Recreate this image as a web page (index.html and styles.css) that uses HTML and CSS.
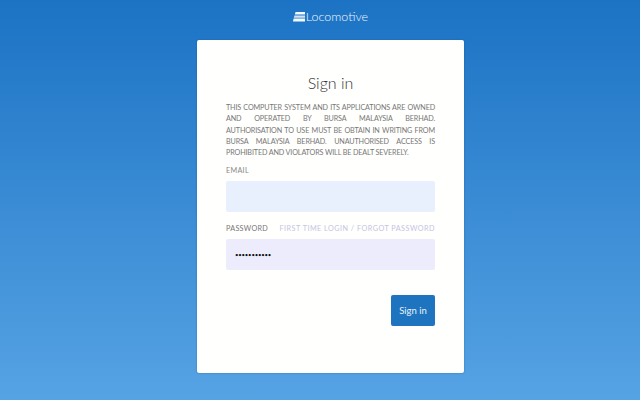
FILE: index.html
```html
<!DOCTYPE html>
<html lang="en">
<head>
<meta charset="utf-8">
<title>Locomotive</title>
<link rel="stylesheet" href="styles.css">
</head>
<body>
<header class="brand">
  <svg class="logo" width="12" height="10" viewBox="0 0 12 10"><path class="logo-a" d="M2.6 0H12V2.6H1.8Z"/><path class="logo-b" d="M1.4 3.4H12V5.8H.9Z"/><path class="logo-c" d="M.6 6.6H12V9.6H0Z"/></svg>
  <span class="brand-name">Locomotive</span>
</header>
<main class="card">
  <h1 class="title">Sign in</h1>
  <p class="notice">
    <span class="line">THIS COMPUTER SYSTEM AND ITS APPLICATIONS ARE OWNED</span>
    <span class="line">AND OPERATED BY BURSA MALAYSIA BERHAD.</span>
    <span class="line">AUTHORISATION TO USE MUST BE OBTAIN IN WRITING FROM</span>
    <span class="line">BURSA MALAYSIA BERHAD. UNAUTHORISED ACCESS IS</span>
    <span class="line line-last">PROHIBITED AND VIOLATORS WILL BE DEALT SEVERELY.</span>
  </p>
  <div class="label-row"><span class="label">EMAIL</span></div>
  <div class="field field-email"></div>
  <div class="label-row label-row-pw">
    <span class="label">PASSWORD</span>
    <span class="link">FIRST TIME LOGIN / FORGOT PASSWORD</span>
  </div>
  <div class="field field-pw"><span class="dots">•••••••••••</span></div>
  <div class="actions"><button class="btn">Sign in</button></div>
</main>
</body>
</html>
```
FILE: styles.css
```css
html, body { height: 100%; }
body {
  margin: 0;
  height: 400px;
  overflow: hidden;
  box-sizing: border-box;
  padding-left: 21px;
  background: linear-gradient(to bottom, #1c73c4 0%, #56a3e4 100%);
  font-family: Lato, "Noto Sans", sans-serif;
  display: flex;
  flex-direction: column;
  align-items: center;
}
.brand {
  height: 40px;
  flex: none;
  display: flex;
  align-items: center;
  justify-content: center;
  gap: 1px;
  color: #f2f8fd;
  padding-bottom: 6px;
  box-sizing: border-box;
}
.logo { display: block; }
.logo-a, .logo-b, .logo-c { fill: #f2f8fd; }
.logo-b { fill: #cfe3f5; }
.brand-name { font-size: 12.5px; line-height: 16px; font-weight: 300; }
.card {
  width: 267px;
  height: 333px;
  box-sizing: border-box;
  background: #fffffd;
  border-radius: 2px;
  box-shadow: 0 0 2px rgba(10, 60, 120, .45);
  padding: 0 29px;
  flex: none;
}
.title {
  margin: 32px 0 0;
  font-size: 16px;
  line-height: 22px;
  font-weight: 300;
  text-align: center;
  color: #2f3336;
}
.notice {
  margin: 8px 0 0;
  font-size: 7.2px;
  line-height: 11.3px;
  letter-spacing: -.13px;
  color: #777;
}
.line {
  display: block;
  white-space: nowrap;
  text-align: justify;
  text-align-last: justify;
}
.line-last { text-align-last: left; }
.label-row {
  display: flex;
  justify-content: space-between;
  margin-top: 7px;
  height: 12px;
  line-height: 12px;
  font-size: 7.2px;
  letter-spacing: .3px;
  white-space: nowrap;
}
.label { color: #888; }
.label-row-pw { margin-top: 11px; }
.label-row-pw .label { color: #777; }
.link { color: #c4c4e4; letter-spacing: .5px; }
.field {
  height: 31px;
  margin-top: 4px;
  border-radius: 2px;
  background: #e8f0fe;
  display: flex;
  align-items: center;
  padding-left: 9px;
}
.field-pw { background: #ececfd; }
.dots { font-size: 6px; letter-spacing: -.2px; color: #111; }
.actions { display: flex; justify-content: flex-end; margin-top: 25px; }
.btn {
  width: 44px;
  height: 31px;
  padding: 0;
  border: 0;
  border-radius: 2px;
  background: #1f74bf;
  color: #e8f2fb;
  font-family: inherit;
  font-size: 9.5px;
}
```
